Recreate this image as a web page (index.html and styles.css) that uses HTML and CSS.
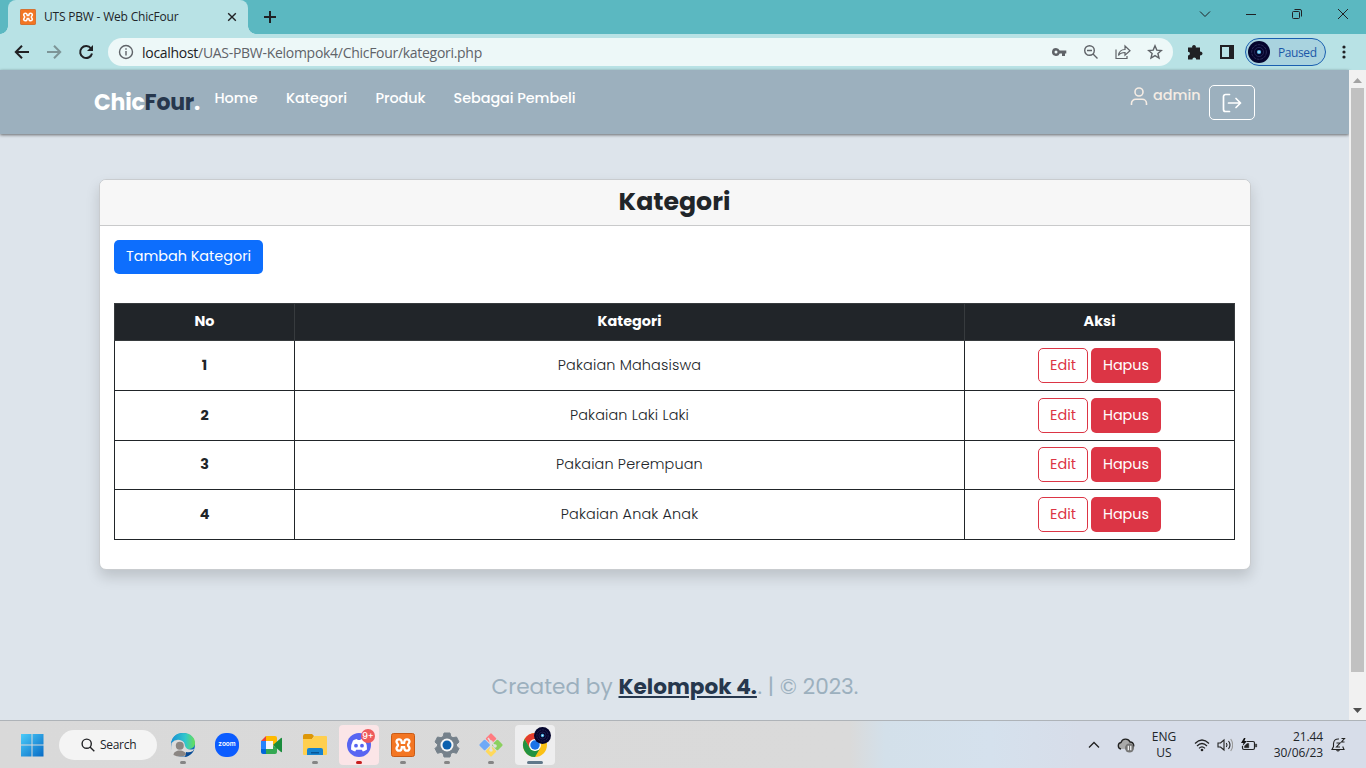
FILE: index.html
```html
<!DOCTYPE html>
<html lang="id">
<head>
<meta charset="utf-8">
<title>UTS PBW - Web ChicFour</title>
<link rel="stylesheet" href="styles.css">
</head>
<body>
<svg class="defs" width="0" height="0">
  <symbol id="xampp" viewBox="0 0 24 24">
    <rect x=".5" y=".5" width="23" height="23" rx="2" fill="#f37623" stroke="#c85b17"/>
    <path d="M10.600 9.500V8.300A2.600 2.600 0 0 0 5.500 8.500C5.500 10.300 7 10.500 7 12S5.500 13.700 5.500 15.500a2.600 2.600 0 0 0 5.100.2V14.500M13.400 9.500V8.300a2.600 2.600 0 0 1 5.100.2C18.500 10.300 17 10.500 17 12s1.500 1.700 1.500 3.500a2.600 2.600 0 0 1-5.100.2V14.500M9.800 9.800h4.400M9.800 14.200h4.400" fill="none" stroke="#fff" stroke-width="2.300" stroke-linejoin="round"/>
  </symbol>
  <symbol id="record" viewBox="0 0 24 24">
    <circle cx="12" cy="12" r="12" fill="#05052d"/>
    <circle cx="12" cy="12" r="8" fill="none" stroke="#434270" stroke-width=".7" stroke-dasharray="3 1"/>
    <circle cx="12" cy="12" r="5" fill="none" stroke="#35366a" stroke-width=".7"/>
    <circle cx="12" cy="12" r="2.300" fill="#55b8e8"/><circle cx="12" cy="12" r=".8" fill="#fff"/>
  </symbol>
</svg>

<div class="tabstrip">
  <div class="tab">
    <svg class="favicon" width="16" height="16"><use href="#xampp"/></svg>
    <span class="tab-title">UTS PBW - Web ChicFour</span>
    <svg width="10" height="10" viewBox="0 0 10 10" class="line s14"><path d="M1.200 1.200l7.600 7.600M8.800 1.200L1.200 8.800"/></svg>
  </div>
  <svg class="newtab line s2" width="12" height="12" viewBox="0 0 12 12"><path d="M6 0v12M0 6h12"/></svg>
  <div class="window-buttons">
    <svg width="12" height="12" viewBox="0 0 12 12" class="line"><path d="M1 3.500l5 5 5-5"/></svg>
    <svg width="12" height="12" viewBox="0 0 12 12" class="line"><path d="M1 6.500h10"/></svg>
    <svg width="12" height="12" viewBox="0 0 12 12" class="line"><rect x="1.500" y="3.500" width="7" height="7" rx="1"/><path d="M3.500 1.500H9a1.500 1.500 0 0 1 1.500 1.500v5.500"/></svg>
    <svg width="12" height="12" viewBox="0 0 12 12" class="line"><path d="M1 1l10 10M11 1L1 11"/></svg>
  </div>
</div>

<div class="toolbar">
  <svg width="16" height="16" viewBox="0 0 16 16" class="line s2"><path d="M15 8H2M8 1.800L1.800 8 8 14.200"/></svg>
  <svg width="16" height="16" viewBox="0 0 16 16" class="line s2 muted"><path d="M1 8h13M8 1.800L14.200 8 8 14.200"/></svg>
  <svg width="16" height="16" viewBox="0 0 16 16" class="line s2"><path d="M13 4.500A6 6 0 1 0 14 9.500"/><path d="M15 1v6H9z" fill="#202124" stroke="none"/></svg>
  <div class="address">
    <svg width="16" height="16" viewBox="0 0 16 16" class="line gray s14"><circle cx="8" cy="8" r="6.500"/><path d="M8 7v4.500M8 4.300v1.500"/></svg>
    <span class="url"><b>localhost</b>/UAS-PBW-Kelompok4/ChicFour/kategori.php</span>
    <div class="address-icons">
      <svg width="16" height="16" viewBox="0 0 16 16"><path fill="#5f6368" fill-rule="evenodd" d="M5 4a4 4 0 1 0 3.700 5.500H11V12h3V9.500h1.300v-3H8.700A4 4 0 0 0 5 4zm0 2.500a1.500 1.500 0 1 1 0 3 1.500 1.500 0 0 1 0-3z"/></svg>
      <svg width="16" height="16" viewBox="0 0 16 16" class="line gray s14"><circle cx="6.500" cy="6.500" r="4.800"/><path d="M10 10l4.500 4.500M4 6.500h5"/></svg>
      <svg width="16" height="16" viewBox="0 0 16 16" class="line gray s12"><path d="M1 5.500V14.500H12V12M3.500 11.500c.5-4 3-6 6.500-6V2l5 4.700-5 4.500V8.500c-3 0-5 .7-6.500 3z"/></svg>
      <svg width="16" height="16" viewBox="0 0 16 16" class="line gray s14"><path d="M8 1.800l1.800 4.300 4.600.4-3.500 3 1.100 4.500L8 11.600 4 14l1.100-4.500-3.500-3 4.600-.4z"/></svg>
    </div>
  </div>
  <svg width="16" height="16" viewBox="0 0 16 16"><path fill="#202124" d="M1 3.500h4.200a1.900 1.900 0 1 1 3.600 0H13v4.200a1.900 1.900 0 1 1 0 3.600V15.500H9.200a1.900 1.900 0 0 0-3.800 0H1v-4a1.900 1.900 0 0 0 0-3.800z"/></svg>
  <svg width="16" height="16" viewBox="0 0 16 16"><path fill="#202124" fill-rule="evenodd" d="M1 1h14v14H1zM3 3v10h7V3z"/></svg>
  <div class="profile"><svg width="22" height="22"><use href="#record"/></svg><span>Paused</span></div>
  <svg class="dots" width="4" height="14" viewBox="0 0 4 14" fill="#202124"><circle cx="2" cy="2" r="1.600"/><circle cx="2" cy="7" r="1.600"/><circle cx="2" cy="12" r="1.600"/></svg>
</div>

<div class="viewport">
  <div class="page">
    <nav class="navbar">
      <div class="brand"><span>Chic</span><span class="dark">Four</span><span>.</span></div>
      <div class="links"><a class="l1">Home</a><a class="l2">Kategori</a><a class="l3">Produk</a><a class="l4">Sebagai Pembeli</a></div>
      <div class="user">
        <svg width="18" height="20" viewBox="0 0 18 20" fill="none" stroke="#f5ece4" stroke-width="1.600"><circle cx="9" cy="5" r="4"/><path d="M1.500 18v-1.500A4.200 4.200 0 0 1 5.700 12.300h6.600a4.200 4.200 0 0 1 4.200 4.200V18"/></svg>
        <span>admin</span>
      </div>
      <div class="logout"><svg width="20" height="20" viewBox="0 0 20 20" fill="none" stroke="#fff" stroke-width="1.700" stroke-linecap="round" stroke-linejoin="round"><path d="M7.500 1.500H3.500a2 2 0 0 0-2 2v13a2 2 0 0 0 2 2h4M6.500 10H18.500M14 5.500L18.500 10l-4.500 4.500"/></svg></div>
    </nav>

    <section class="card">
      <h1 class="card-header"><span>Kategori</span></h1>
      <div class="card-body">
        <a class="btn primary">Tambah Kategori</a>
        <table class="table">
          <thead><tr><th class="c-no">No</th><th>Kategori</th><th class="c-act">Aksi</th></tr></thead>
          <tbody>
            <tr><th>1</th><td>Pakaian Mahasiswa</td><td><div class="actions"><a class="btn edit">Edit</a><a class="btn danger">Hapus</a></div></td></tr>
            <tr><th>2</th><td>Pakaian Laki Laki</td><td><div class="actions"><a class="btn edit">Edit</a><a class="btn danger">Hapus</a></div></td></tr>
            <tr><th>3</th><td>Pakaian Perempuan</td><td><div class="actions"><a class="btn edit">Edit</a><a class="btn danger">Hapus</a></div></td></tr>
            <tr><th>4</th><td>Pakaian Anak Anak</td><td><div class="actions"><a class="btn edit">Edit</a><a class="btn danger">Hapus</a></div></td></tr>
          </tbody>
        </table>
      </div>
    </section>

    <footer class="footer"><span class="f1">Created by</span><a class="f2">Kelompok 4.</a><span class="f3">. | © 2023.</span></footer>
  </div>
  <div class="scrollbar">
    <svg width="9" height="5" viewBox="0 0 9 5"><path d="M0 5l4.500-5L9 5z" fill="#a3a3a3"/></svg>
    <div class="thumb"></div>
    <svg width="9" height="5" viewBox="0 0 9 5"><path d="M0 0l4.500 5L9 0z" fill="#505050"/></svg>
  </div>
</div>

<div class="taskbar">
  <svg class="start" width="24" height="24" viewBox="0 0 24 24"><defs><linearGradient id="w" x1="0" y1="0" x2="24" y2="24" gradientUnits="userSpaceOnUse"><stop offset="0" stop-color="#4fd0fb"/><stop offset="1" stop-color="#0568c4"/></linearGradient></defs><path fill="url(#w)" d="M1 1h10.500v10.500H1zM12.500 1H23.500v10.500H12.500zM1 12.500h10.500V23.500H1zM12.500 12.500H23.500V23.500H12.500z"/></svg>
  <div class="search"><svg width="14" height="14" viewBox="0 0 14 14" class="line s14"><circle cx="5.700" cy="5.700" r="4.600"/><path d="M9 9l4.300 4.300"/></svg><span>Search</span></div>
  <div class="apps">
    <div class="app dot"><svg width="26" height="26" viewBox="0 0 26 26"><defs><linearGradient id="e"><stop offset="0" stop-color="#1790d4"/><stop offset=".6" stop-color="#31c7cc"/><stop offset="1" stop-color="#69df55"/></linearGradient></defs><circle cx="13" cy="13" r="12" fill="#126dba"/><path d="M1 12C2 4 7 1 13 1c8 0 12 5 12 10 0 4-3 6-7 6-3 0-4-1-3-3 0-4-3-6-6-6-4 0-7 2-8 4z" fill="url(#e)"/><path d="M14 15c2 4 6 5 10 3-2 4-6 7-10 7z" fill="#0b4b94"/><path d="M1.500 11Q5 7 10 8q5 1 5 6 2 5 9 3l-1 2q-4 2-7 1l-1 4.500H4Q0 20 1.500 11z" fill="#dcdcdc"/><circle cx="9.800" cy="13.700" r="4" fill="#8b8683"/><path d="M3.500 23c0-6 12.500-6 12.500 0q-6 3-12.500 0z" fill="#8b8683"/></svg></div>
    <div class="app"><div class="zoom">zoom</div></div>
    <div class="app"><svg width="26" height="26" viewBox="0 0 26 26"><path d="M3 9l5-5v5z" fill="#ea4335"/><path d="M3 9h5v8H3z" fill="#2684fc"/><path d="M3 17h5v5H5q-2 0-2-2z" fill="#0066da"/><path d="M8 4h9q2 0 2 2v5l-4 3V9H8z" fill="#ffba00"/><path d="M8 17h7v-3l4 1v5q0 2-2 2H8z" fill="#34a853"/><path d="M8 9h7v8H8z" fill="#f4f6f8"/><path d="M15 13l8-7q1-.5 1 .5v13q0 1-1 .5z" fill="#1a8c3c"/></svg></div>
    <div class="app dot"><svg width="26" height="26" viewBox="0 0 26 26"><path d="M1 4q0-2 2-2h7l2 2-2 3H1z" fill="#dd9708"/><path d="M1 7h9l2.500-3H24q1 0 1 1v17q0 1-1 1H2q-1 0-1-1z" fill="#ffcf4e"/><path d="M5 23v-5q0-2 2-2h12q2 0 2 2v5z" fill="#1683cf"/><path d="M9 20h8v1.500H9z" fill="#075596"/></svg></div>
    <div class="app discord dot"><svg width="26" height="26" viewBox="0 0 26 26"><circle cx="13" cy="13" r="12" fill="#5865f2"/><path fill="#fff" fill-rule="evenodd" d="M7 8.500q2-1.300 4-1.500l.7 1h2.600l.7-1q2 .2 4 1.500 2.200 4 2 9-2 1.700-4.200 2l-1-1.800h-5.600l-1 1.800q-2.200-.3-4.200-2-.2-5 2-9zM10 11.800a1.900 1.900 0 1 0 0 3.800 1.900 1.900 0 0 0 0-3.800zm6 0a1.900 1.900 0 1 0 0 3.800 1.900 1.900 0 0 0 0-3.800z"/></svg><span class="badge">9+</span></div>
    <div class="app dot"><svg width="24" height="24"><use href="#xampp"/></svg></div>
    <div class="app dot"><svg width="26" height="26" viewBox="0 0 26 26"><path fill="#75818b" stroke="#75818b" stroke-linejoin="round" d="M10 1h6l.8 3.500 2.200 1.200L22.500 5l2.500 5-2.500 2.300v1.700L25 16.500l-2.500 4.800-3.500-1-2.200 1.300L16 25h-6l-.8-3.400L7 20.300l-3.500 1L1 16.500l2.500-2.500v-1.700L1 10l2.500-5L7 5.700l2.200-1.200z"/><circle cx="13" cy="13" r="6.500" fill="#f5f5f5"/><circle cx="13" cy="13" r="4.500" fill="#0b60ae"/></svg></div>
    <div class="app dot"><svg width="26" height="26" viewBox="0 0 26 26"><g transform="rotate(45 13 13)"><rect x="4.500" y="4.500" width="8" height="8" rx="1" fill="#ff7b80"/><rect x="13.500" y="4.500" width="8" height="8" rx="1" fill="#8bd05f"/><rect x="4.500" y="13.500" width="8" height="8" rx="1" fill="#6fa9f7"/><rect x="13.500" y="13.500" width="8" height="8" rx="1" fill="#ffd95b"/></g><path d="M10 6l3 4v9M13 10l4 4" stroke="#e0e0df" stroke-width="1.600" fill="none"/><circle cx="13" cy="10" r="1.800" fill="#e0e0df"/><circle cx="13" cy="18" r="1.800" fill="#e0e0df"/><circle cx="17" cy="14" r="1.800" fill="#e0e0df"/></svg></div>
    <div class="app chrome dot"><svg width="26" height="26" viewBox="0 0 26 26"><circle cx="13" cy="13" r="12" fill="#fbc116"/><path d="M2.600 7A12 12 0 0 1 23.400 7H13L7.800 16z" fill="#e33b2e"/><path d="M2.600 7A12 12 0 0 0 13 25l5.200-9-5.200 3-5.200-3z" fill="#229342"/><circle cx="13" cy="13" r="6" fill="#fff"/><circle cx="13" cy="13" r="4.700" fill="#1a73e8"/></svg><svg class="avatar" width="17" height="17"><use href="#record"/></svg></div>
  </div>
  <div class="tray">
    <svg class="t-up" width="12" height="8" viewBox="0 0 12 8"><path d="M1 6.500l5-5 5 5" fill="none" stroke="#222" stroke-width="1.300"/></svg>
    <svg class="t-cloud" width="18" height="16" viewBox="0 0 18 16"><path d="M4 12a3.300 3.300 0 0 1 0-6.500A4.800 4.800 0 0 1 13 5a3.500 3.500 0 0 1 2 6.500" fill="#aaa" stroke="#222" stroke-width="1.300"/><circle cx="12.500" cy="11" r="4.500" fill="#757575"/><path d="M11.300 8.800v4.400M13.800 8.800v4.400" stroke="#fff" stroke-width="1.200"/></svg>
    <div class="lang">ENG<br>US</div>
    <svg class="t-wifi" width="16" height="14" viewBox="0 0 16 14" fill="none" stroke="#222" stroke-width="1.200"><path d="M1 5.500q7-7 14 0M3 8q5-5 10 0M5 10.300q3-3 6 0"/><circle cx="8" cy="12" r="1.300" fill="#222" stroke="none"/></svg>
    <svg class="t-vol" width="16" height="14" viewBox="0 0 16 14" fill="none" stroke="#222" stroke-width="1.100"><path d="M1 5v4h2.500L7 12V2L3.500 5zM9.300 5q1.500 2 0 4M11.500 3q3 4 0 8"/><path d="M13.700 1q4 6 0 12" stroke="#999"/></svg>
    <svg class="t-bat" width="17" height="14" viewBox="0 0 17 14"><path d="M6 3.500h6q1.500 0 1.500 1.500v5q0 1.500-1.500 1.500H3q-1.500 0-1.500-1.500V8" fill="none" stroke="#222" stroke-width="1.200"/><path d="M3.500 9.800V8L6 5.500h1.800V9.800zM14.500 6h1.200v3h-1.200z" fill="#222" stroke="#222" stroke-width=".4"/><path d="M3 0L0 5h2.500L1.500 8 6 3H3.500L4.500 0z" fill="#111"/></svg>
    <div class="clock">21.44<br>30/06/23</div>
    <svg class="t-bell" width="15" height="16" viewBox="0 0 15 16" fill="none" stroke="#222" stroke-width="1.100"><path d="M8 2Q3 1.500 2.500 6.500v3L1 12.500h12l-1.300-3M5.500 12.800q1.500 2.500 3 0M5.500 6h3.500l-3.500 4H9M10.500 1.500h3l-3 3.500h3"/></svg>
  </div>
</div>
</body>
</html>
```
FILE: styles.css
```css
* { box-sizing: border-box; }
body { margin: 0; width: 1366px; height: 768px; overflow: hidden; display: flex; flex-direction: column; font-family: "Open Sans", sans-serif; color: #212529; }
svg { display: block; flex: none; }
.defs { position: absolute; }
.line { fill: none; stroke: #202124; stroke-width: 1; }
.s12 { stroke-width: 1.2; }
.s14 { stroke-width: 1.4; }
.s2 { stroke-width: 2; }
.gray { stroke: #5f6368; }
.muted { stroke: #7d9597; }

.tabstrip { height: 34px; flex: none; background: #5bb8c1; display: flex; align-items: flex-start; padding-left: 8px; }
.tab { width: 240px; height: 34px; background: #b8e2e5; border-radius: 8px 8px 0 0; display: flex; align-items: center; padding: 0 11px 0 12px; position: relative; }
.tab::before, .tab::after { content: ""; position: absolute; bottom: 0; width: 8px; height: 8px; }
.tab::before { left: -8px; background: radial-gradient(circle at 0 0, #5bb8c1 7.5px, #b8e2e5 8px); }
.tab::after { right: -8px; background: radial-gradient(circle at 100% 0, #5bb8c1 7.5px, #b8e2e5 8px); }
.tab-title { font-size: 12px; letter-spacing: -.2px; margin: -1px 0 0 8px; flex: 1; white-space: nowrap; }
.newtab { margin: 11px 0 0 16px; }
.window-buttons { margin: 8px 17px 0 auto; display: flex; gap: 34px; }

.toolbar { height: 36px; flex: none; background: #b8e2e5; display: flex; align-items: center; gap: 16px; padding-left: 14px; }
.address { width: 1065px; height: 28px; margin-left: -2px; border-radius: 14px; background: #edf8f8; display: flex; align-items: center; padding: 0 10px; }
.url { margin-left: 8px; font-size: 14px; letter-spacing: -.29px; color: #5f6368; white-space: nowrap; }
.url b { font-weight: 400; color: #202124; }
.address-icons { margin-left: auto; display: flex; gap: 16px; }
.address + svg { margin-left: -2px; }
.profile { width: 81px; height: 28px; margin-left: -6px; border: 1px solid #1a5fb0; border-radius: 14px; background: #a9d3df; color: #1b57a8; display: flex; align-items: center; padding-left: 2px; font-size: 12px; letter-spacing: -.4px; }
.profile span { margin-left: 8px; }

.viewport { height: 650px; flex: none; display: flex; }
.page { width: 1349px; background: #dde4eb; font-family: Poppins, Inter, sans-serif; font-size: 14.4px; }
.navbar { height: 64px; background: #9cb0be; box-shadow: 0 1px 3px rgba(0, 0, 0, .55); display: flex; align-items: flex-start; padding-left: 94px; white-space: nowrap; }
.brand { width: 120.500px; margin-top: 16px; font-size: 22px; line-height: 34px; font-weight: 700; letter-spacing: -.2px; color: #fff; }
.brand .dark { color: #26374d; }
.links { display: flex; margin-top: 18px; line-height: 20px; font-weight: 500; letter-spacing: -.05px; color: #fff; }
.l1 { width: 71.500px; }
.l2 { width: 89.500px; }
.l3 { width: 78px; }
.user { margin-left: auto; display: flex; padding-top: 15px; line-height: 20px; font-weight: 500; color: #f5ece4; width: 79px; }
.user svg { margin-top: 2px; }
.user span { margin-left: 5px; }
.logout { width: 46px; height: 35px; margin: 15px 94px 0 0; border: 1px solid #fff; border-radius: 5px; display: flex; align-items: center; justify-content: center; }

.card { width: 1152px; height: 391px; margin: 45px 0 0 99px; border: 1px solid #c9cccf; border-radius: 7px; background: #fff; box-shadow: 0 7px 14px rgba(0, 0, 0, .15); overflow: hidden; }
.card-header { margin: 0; height: 46px; background: #f7f7f7; border-bottom: 1px solid #c9cacb; text-align: center; font-size: 25.2px; line-height: 44px; font-weight: 600; padding-right: 1px; }
.card-header { font-weight: 700; }
.card-body { padding: 14px; }
.btn { display: inline-flex; align-items: center; justify-content: center; height: 35px; border-radius: 5px; white-space: nowrap; }
.primary { width: 149px; height: 34px; display: flex; padding-bottom: 1px; background: #0d6efd; color: #fff; }
.table { width: 1121px; margin-top: 29px; border-collapse: collapse; table-layout: fixed; text-align: center; }
.table th, .table td { border: 1px solid #212529; padding: 0; }
.table tbody tr { height: 49.75px; }
.table thead tr { height: 37px; background: #212529; color: #fff; }
.table thead th { border-color: #373b3e; padding-bottom: 2px; }
.table td { font-weight: 300; letter-spacing: .16px; }
.c-no { width: 180px; }
.c-act { width: 270px; }
.actions { display: flex; justify-content: center; gap: 3px; font-weight: 400; letter-spacing: 0; }
.edit { width: 50px; border: 1px solid #dc3545; color: #dc3545; }
.danger { width: 70px; background: #dc3545; color: #fff; }
.footer { height: 34px; margin-top: 99px; padding-left: 491.500px; display: flex; align-items: center; font-size: 21.6px; color: #9cb0be; white-space: nowrap; }
.f1 { width: 127px; }
.f2 { width: 139px; font-weight: 700; color: #26374d; text-decoration: underline; text-decoration-thickness: 2px; text-underline-offset: 2px; }

.scrollbar { width: 17px; background: #f1f1f1; display: flex; flex-direction: column; align-items: center; padding: 8px 0 7px; }
.thumb { width: 13px; height: 584px; margin: 5px 0 auto 0; background: #c1c1c1; }

.taskbar { height: 48px; flex: none; border-top: 1px solid #aeb3b8; background: linear-gradient(90deg, #d9d9d9 0, #dadada 850px, #d3e0ea 885px, #d5e1ed 990px, #d7dde9 1080px, #d7dde9 1366px); display: flex; align-items: center; padding-left: 20px; font-size: 12px; }
.search { width: 98px; height: 30px; margin-left: 15px; border-radius: 15px; background: #f4f4f4; display: flex; align-items: center; padding-left: 22px; gap: 5px; letter-spacing: -.3px; }
.apps { display: flex; margin-left: 6px; gap: 4px; }
.app { width: 40px; height: 40px; border-radius: 4px; display: flex; align-items: center; justify-content: center; position: relative; }
.dot::after { content: ""; position: absolute; bottom: 1px; left: 17px; width: 6px; height: 3px; border-radius: 2px; background: #858585; }
.zoom { width: 24px; height: 24px; border-radius: 11px; background: #0b5cff; color: #fff; font: 600 6.5px/23px "Inter", sans-serif; text-align: center; }
.discord { background: #fbe5e7; }
.discord::after { background: #c81e1e; }
.badge { position: absolute; left: 22px; top: 4px; width: 14px; height: 14px; border-radius: 7px; background: #ee5a5c; color: #fff; font: 500 9px/14px Inter, sans-serif; text-align: center; }
.chrome { background: #eeeeef; }
.chrome::after { left: 12px; width: 16px; background: #60788a; }
.avatar { position: absolute; left: 19px; top: 2px; }
.tray { margin-left: auto; width: 278px; display: flex; align-items: center; line-height: 16px; }
.t-cloud { margin-left: 17px; }
.lang { width: 30px; margin-left: 14px; text-align: center; }
.t-wifi { margin-left: 15px; }
.t-vol { margin-left: 7px; }
.t-bat { margin-left: 8px; }
.clock { width: 56px; margin-left: 9px; text-align: right; white-space: nowrap; letter-spacing: -.1px; }
.t-bell { margin-left: 8px; }
```
